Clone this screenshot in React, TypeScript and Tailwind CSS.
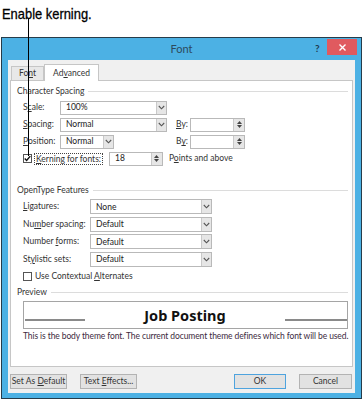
import React from 'react';

const U = ({ children }: { children: React.ReactNode }) => <span className="underline underline-offset-1">{children}</span>;

function Chevron() {
    return (
        <svg width="7" height="5" viewBox="0 0 7 5">
            <path d="M0.8 1 L3.5 3.8 L6.2 1" fill="none" stroke="#555" strokeWidth="1.1" />
        </svg>
    );
}

function Select({ value, w, h = 'h-[14px]' }: { value: string; w: string; h?: string }) {
    return (
        <div className={`${w} ${h} flex border border-[#b9b9b9] bg-white`}>
            <span className="flex-1 pl-[5px] leading-none flex items-center text-[#222]">{value}</span>
            <div className="w-[10px] border-l border-[#c9c9c9] bg-[#e6e6e6] flex items-center justify-center">
                <Chevron />
            </div>
        </div>
    );
}

function Spin({ value, w }: { value: string; w: string }) {
    return (
        <div className={`${w} h-[14px] flex border border-[#b9b9b9] bg-white`}>
            <span className="flex-1 pl-[5px] flex items-center text-[#222]">{value}</span>
            <div className="w-[11px] bg-[#e6e6e6] border-l border-[#c9c9c9] flex flex-col items-center justify-center gap-[1px]">
                <svg width="5" height="3" viewBox="0 0 5 3"><path d="M0 3 L2.5 0 L5 3Z" fill="#444" /></svg>
                <svg width="5" height="3" viewBox="0 0 5 3"><path d="M0 0 L2.5 3 L5 0Z" fill="#444" /></svg>
            </div>
        </div>
    );
}

function Section({ title }: { title: string }) {
    return (
        <div className="h-[16px] flex items-center gap-[4px] pr-[4px]">
            <span className="text-[#333]">{title}</span>
            <div className="flex-1 h-px bg-[#dcdcdc]" />
        </div>
    );
}

function Check({ checked }: { checked?: boolean }) {
    return (
        <div className="w-[9px] h-[9px] border border-[#555] bg-white flex items-center justify-center">
            {checked && (
                <svg width="8" height="7" viewBox="0 0 8 7">
                    <path d="M0.8 3.6 L3 5.8 L7.2 0.8" fill="none" stroke="#111" strokeWidth="1.6" />
                </svg>
            )}
        </div>
    );
}

function Button({ children, w, blue }: { children: React.ReactNode; w: string; blue?: boolean }) {
    return (
        <div className={`${w} h-[15px] border ${blue ? 'border-[#4ea3de]' : 'border-[#b3b3b3]'} bg-[#e2e2e2] flex items-center justify-center text-[#333]`}>
            <span>{children}</span>
        </div>
    );
}

export default function App() {
    return (
        <div className="relative w-[363px] h-[400px] bg-white overflow-hidden" style={{ fontFamily: 'Lato, "Noto Sans", sans-serif' }}>
            {/* Callout */}
            <div className="h-[37px] pl-[2px] pt-[1px]">
                <span className="text-[15px] leading-[16px] text-black inline-block origin-left scale-x-[0.86] [-webkit-text-stroke:0.3px_black]" style={{ fontFamily: '"Liberation Sans", sans-serif' }}>
                    Enable kerning.
                </span>
            </div>

            {/* Dialog */}
            <div className="mx-[1px] h-[362px] border border-[#263c4a] bg-[#4cb1e4] flex flex-col text-[8.5px]">
                <div className="h-[22px] flex items-center relative shrink-0">
                    <span className="flex-1 text-center text-[11px] text-[#2d4a5c]">Font</span>
                    <span className="absolute left-[313px] top-[3px] text-[10px] font-bold text-[#1f3a4e]">?</span>
                    <div className="absolute left-[325px] top-[1px] w-[30px] h-[16px] bg-[#e05a5f] flex items-center justify-center">
                        <svg width="7" height="7" viewBox="0 0 7 7"><path d="M0.5 0.5 L6.5 6.5 M6.5 0.5 L0.5 6.5" stroke="#fff" strokeWidth="1.4" /></svg>
                    </div>
                </div>

                <div className="flex-1 mx-[6px] mb-[5px] bg-[#f0f0f0] flex flex-col px-[2px] pt-[3px]">
                    {/* Tabs */}
                    <div className="flex items-end h-[17px] pl-[1px]">
                        <div className="h-[14px] px-[7px] border border-b-0 border-[#c6c6c6] bg-[#e8e8e8] flex items-center text-[#333]">
                            <span>Fo<U>n</U>t</span>
                        </div>
                        <div className="h-[17px] px-[8px] border border-b-0 border-[#c6c6c6] bg-white flex items-center text-[#333] -mb-px relative z-10">
                            <span>Ad<U>v</U>anced</span>
                        </div>
                    </div>

                    {/* Panel */}
                    <div className="h-[287px] border border-[#c6c6c6] bg-white pl-[6px] pt-[2px] flex flex-col">
                        <Section title="Character Spacing" />
                        <div className="pl-[6px] flex flex-col">
                            <div className="h-[17px] flex items-center">
                                <span className="w-[37px] text-[#333]">S<U>c</U>ale:</span>
                                <Select value="100%" w="w-[107px]" />
                            </div>
                            <div className="h-[17px] flex items-center">
                                <span className="w-[37px] text-[#333]"><U>S</U>pacing:</span>
                                <Select value="Normal" w="w-[107px]" />
                                <span className="w-[23px] pl-[9px] text-[#333]"><U>B</U>y:</span>
                                <Spin value="" w="w-[55px]" />
                            </div>
                            <div className="h-[17px] flex items-center">
                                <span className="w-[37px] text-[#333]"><U>P</U>osition:</span>
                                <Select value="Normal" w="w-[54px]" />
                                <span className="w-[76px] pl-[62px] text-[#333]">B<U>y</U>:</span>
                                <Spin value="" w="w-[55px]" />
                            </div>
                            <div className="h-[17px] flex items-center">
                                <Check checked />
                                <span className="ml-[2px] px-[1px] border border-dotted border-[#444] leading-[10px] text-[#333]"><U>K</U>erning for fonts:</span>
                                <div className="ml-[6px]">
                                    <Spin value="18" w="w-[54px]" />
                                </div>
                                <span className="ml-[6px] text-[#333]">P<U>o</U>ints and above</span>
                            </div>
                        </div>

                        <div className="mt-[15px]">
                            <Section title="OpenType Features" />
                        </div>
                        <div className="pl-[6px] flex flex-col">
                            {[
                                ['Ligatures:', 'None', 0],
                                ['Number spacing:', 'Default', 1],
                                ['Number forms:', 'Default', 2],
                                ['Stylistic sets:', 'Default', 3],
                            ].map(([label, value, i]) => (
                                <div key={label as string} className="h-[17.5px] flex items-center">
                                    <span className="w-[67px] whitespace-nowrap text-[#333]">
                                        {i === 0 && <><U>L</U>igatures:</>}
                                        {i === 1 && <>Nu<U>m</U>ber spacing:</>}
                                        {i === 2 && <>Number <U>f</U>orms:</>}
                                        {i === 3 && <>St<U>y</U>listic sets:</>}
                                    </span>
                                    <Select value={value as string} w="w-[122px]" h="h-[15px]" />
                                </div>
                            ))}
                            <div className="h-[16px] flex items-center gap-[3px]">
                                <Check />
                                <span className="text-[#333]">Use Contextual <U>A</U>lternates</span>
                            </div>
                        </div>

                        <Section title="Preview" />
                        <div className="ml-[6px] mr-[4px] mt-[1px] h-[28px] border border-[#a5a5a5] bg-white flex items-center">
                            <div className="w-[60px] h-[2px] bg-[#8a8a8a] mt-[10px] ml-[1px]" />
                            <span className="flex-1 text-center text-[14.5px] font-bold text-[#111] leading-none" style={{ fontFamily: '"Noto Sans", sans-serif' }}>Job Posting</span>
                            <div className="w-[62px] h-[2px] bg-[#8a8a8a] mt-[10px]" />
                        </div>
                        <div className="h-[15px] pl-[6px] flex items-center whitespace-nowrap tracking-[-0.1px] text-[#3d2a3e]">
                            This is the body theme font. The current document theme defines which font will be used.
                        </div>
                    </div>

                    {/* Buttons */}
                    <div className="mt-[7px] flex items-center gap-[13px] whitespace-nowrap">
                        <Button w="w-[57px]">Set As <U>D</U>efault</Button>
                        <Button w="w-[57px]">Text <U>E</U>ffects...</Button>
                        <div className="flex-1" />
                        <Button w="w-[52px]" blue>OK</Button>
                        <div className="mr-[1px]">
                            <Button w="w-[53px]">Cancel</Button>
                        </div>
                    </div>
                </div>
            </div>

            {/* Callout leader */}
            <div className="absolute left-[28px] top-[18px] w-px h-[138px] bg-black z-20" />
        </div>
    );
}
